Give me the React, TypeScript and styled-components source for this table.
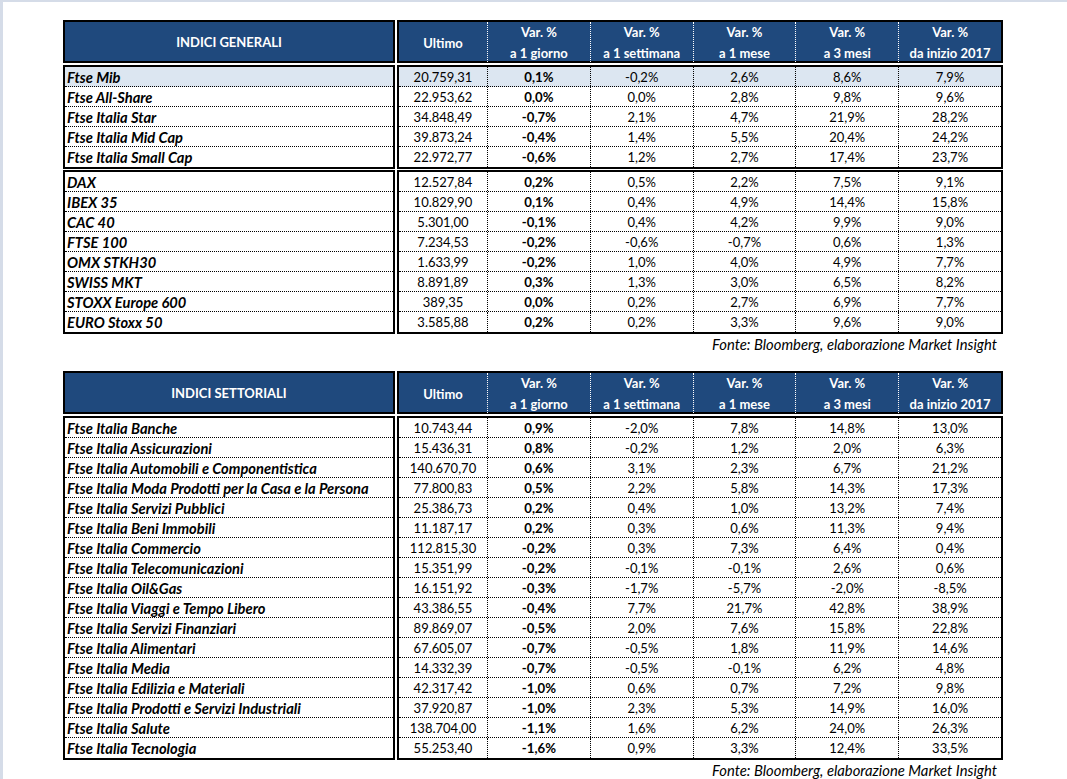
import styled, { createGlobalStyle } from 'styled-components';

const GlobalStyle = createGlobalStyle`
  html, body {
    margin: 0;
    padding: 0;
    background: #ffffff;
  }
  body {
    font-family: 'Lato', 'Liberation Sans', sans-serif;
    color: #000000;
  }
`;

const Page = styled.div`
  min-height: 100vh;
  box-sizing: border-box;
  border-top: 2px solid #d5dce8;
  border-left: 3px solid #d5dce8;
  padding: 18px 0 0 60px;
`;

const Section = styled.section`
  width: 940px;
  display: grid;
  grid-template-columns: 332px 606px;
  column-gap: 2px;
`;

const Block = styled.div<{ $head?: boolean; $gap?: number }>`
  border: 2px solid #000000;
  background: ${(p) => (p.$head ? '#1f497d' : '#ffffff')};
  color: ${(p) => (p.$head ? '#ffffff' : '#000000')};
  margin-top: ${(p) => p.$gap ?? 0}px;
`;

const HeadTitle = styled.div`
  height: 39px;
  display: flex;
  align-items: center;
  justify-content: center;
  font-weight: 700;
  font-size: 13px;
`;

const HeadGrid = styled.div`
  display: grid;
  grid-template-columns: 88px repeat(5, 1fr);
  height: 39px;
`;

const HeadCell = styled.div`
  display: flex;
  flex-direction: column;
  align-items: center;
  justify-content: center;
  font-weight: 700;
  font-size: 13px;
  line-height: 21px;
  white-space: nowrap;
  & + & {
    border-left: 1px dotted #ffffff;
  }
`;

const NameRow = styled.div<{ $hl?: boolean }>`
  box-sizing: border-box;
  height: 20px;
  padding-left: 2px;
  display: flex;
  align-items: center;
  font-weight: 700;
  font-style: italic;
  font-size: 14.7px;
  white-space: nowrap;
  background: ${(p) => (p.$hl ? '#dce6f1' : 'transparent')};
  &:not(:last-child) {
    border-bottom: 1px dotted #000000;
  }
`;

const DataRow = styled.div<{ $hl?: boolean }>`
  box-sizing: border-box;
  height: 20px;
  display: grid;
  grid-template-columns: 88px repeat(5, 1fr);
  background: ${(p) => (p.$hl ? '#dce6f1' : 'transparent')};
  &:not(:last-child) {
    border-bottom: 1px dotted #000000;
  }
`;

const Cell = styled.div<{ $bold?: boolean }>`
  display: flex;
  align-items: center;
  justify-content: center;
  font-size: ${(p) => (p.$bold ? 13.2 : 13)}px;
  font-weight: ${(p) => (p.$bold ? 700 : 400)};
  & + & {
    border-left: 1px dotted #000000;
  }
`;

const Source = styled.div`
  width: 940px;
  box-sizing: border-box;
  text-align: right;
  padding: 1px 6px 0 0;
  font-style: italic;
  font-size: 14.8px;
  line-height: 18px;
`;

const Spacer = styled.div`
  height: 18px;
`;

type Row = [string, string, string, string, string, string, string];

const generali: Row[][] = [
  [
    ['Ftse Mib', '20.759,31', '0,1%', '-0,2%', '2,6%', '8,6%', '7,9%'],
    ['Ftse All-Share', '22.953,62', '0,0%', '0,0%', '2,8%', '9,8%', '9,6%'],
    ['Ftse Italia Star', '34.848,49', '-0,7%', '2,1%', '4,7%', '21,9%', '28,2%'],
    ['Ftse Italia Mid Cap', '39.873,24', '-0,4%', '1,4%', '5,5%', '20,4%', '24,2%'],
    ['Ftse Italia Small Cap', '22.972,77', '-0,6%', '1,2%', '2,7%', '17,4%', '23,7%'],
  ],
  [
    ['DAX', '12.527,84', '0,2%', '0,5%', '2,2%', '7,5%', '9,1%'],
    ['IBEX 35', '10.829,90', '0,1%', '0,4%', '4,9%', '14,4%', '15,8%'],
    ['CAC 40', '5.301,00', '-0,1%', '0,4%', '4,2%', '9,9%', '9,0%'],
    ['FTSE 100', '7.234,53', '-0,2%', '-0,6%', '-0,7%', '0,6%', '1,3%'],
    ['OMX STKH30', '1.633,99', '-0,2%', '1,0%', '4,0%', '4,9%', '7,7%'],
    ['SWISS MKT', '8.891,89', '0,3%', '1,3%', '3,0%', '6,5%', '8,2%'],
    ['STOXX Europe 600', '389,35', '0,0%', '0,2%', '2,7%', '6,9%', '7,7%'],
    ['EURO Stoxx 50', '3.585,88', '0,2%', '0,2%', '3,3%', '9,6%', '9,0%'],
  ],
];

const settoriali: Row[][] = [
  [
    ['Ftse Italia Banche', '10.743,44', '0,9%', '-2,0%', '7,8%', '14,8%', '13,0%'],
    ['Ftse Italia Assicurazioni', '15.436,31', '0,8%', '-0,2%', '1,2%', '2,0%', '6,3%'],
    ['Ftse Italia Automobili e Componentistica', '140.670,70', '0,6%', '3,1%', '2,3%', '6,7%', '21,2%'],
    ['Ftse Italia Moda Prodotti per la Casa e la Persona', '77.800,83', '0,5%', '2,2%', '5,8%', '14,3%', '17,3%'],
    ['Ftse Italia Servizi Pubblici', '25.386,73', '0,2%', '0,4%', '1,0%', '13,2%', '7,4%'],
    ['Ftse Italia Beni Immobili', '11.187,17', '0,2%', '0,3%', '0,6%', '11,3%', '9,4%'],
    ['Ftse Italia Commercio', '112.815,30', '-0,2%', '0,3%', '7,3%', '6,4%', '0,4%'],
    ['Ftse Italia Telecomunicazioni', '15.351,99', '-0,2%', '-0,1%', '-0,1%', '2,6%', '0,6%'],
    ['Ftse Italia Oil&Gas', '16.151,92', '-0,3%', '-1,7%', '-5,7%', '-2,0%', '-8,5%'],
    ['Ftse Italia Viaggi e Tempo Libero', '43.386,55', '-0,4%', '7,7%', '21,7%', '42,8%', '38,9%'],
    ['Ftse Italia Servizi Finanziari', '89.869,07', '-0,5%', '2,0%', '7,6%', '15,8%', '22,8%'],
    ['Ftse Italia Alimentari', '67.605,07', '-0,7%', '-0,5%', '1,8%', '11,9%', '14,6%'],
    ['Ftse Italia Media', '14.332,39', '-0,7%', '-0,5%', '-0,1%', '6,2%', '4,8%'],
    ['Ftse Italia Edilizia e Materiali', '42.317,42', '-1,0%', '0,6%', '0,7%', '7,2%', '9,8%'],
    ['Ftse Italia Prodotti e Servizi Industriali', '37.920,87', '-1,0%', '2,3%', '5,3%', '14,9%', '16,0%'],
    ['Ftse Italia Salute', '138.704,00', '-1,1%', '1,6%', '6,2%', '24,0%', '26,3%'],
    ['Ftse Italia Tecnologia', '55.253,40', '-1,6%', '0,9%', '3,3%', '12,4%', '33,5%'],
  ],
];

const periods = ['a 1 giorno', 'a 1 settimana', 'a 1 mese', 'a 3 mesi', 'da inizio 2017'];

function IndexTable({ title, groups, highlightFirst }: { title: string; groups: Row[][]; highlightFirst?: boolean }) {
  return (
    <Section>
      <Block $head>
        <HeadTitle>{title}</HeadTitle>
      </Block>
      <Block $head>
        <HeadGrid>
          <HeadCell>Ultimo</HeadCell>
          {periods.map((p) => (
            <HeadCell key={p}>
              <span>Var. %</span>
              <span>{p}</span>
            </HeadCell>
          ))}
        </HeadGrid>
      </Block>
      {groups.map((rows, gi) => [
        <Block key={`n${gi}`} $gap={gi === 0 ? 2 : 1}>
          {rows.map((r, i) => (
            <NameRow key={r[0]} $hl={highlightFirst && gi === 0 && i === 0}>
              {r[0]}
            </NameRow>
          ))}
        </Block>,
        <Block key={`d${gi}`} $gap={gi === 0 ? 2 : 1}>
          {rows.map((r, i) => (
            <DataRow key={r[0]} $hl={highlightFirst && gi === 0 && i === 0}>
              {r.slice(1).map((v, ci) => (
                <Cell key={ci} $bold={ci === 1}>
                  {v}
                </Cell>
              ))}
            </DataRow>
          ))}
        </Block>,
      ])}
    </Section>
  );
}

export default function App() {
  return (
    <>
      <GlobalStyle />
      <Page>
        <IndexTable title="INDICI GENERALI" groups={generali} highlightFirst />
        <Source>Fonte: Bloomberg, elaborazione Market Insight</Source>
        <Spacer />
        <IndexTable title="INDICI SETTORIALI" groups={settoriali} />
        <Source>Fonte: Bloomberg, elaborazione Market Insight</Source>
      </Page>
    </>
  );
}
